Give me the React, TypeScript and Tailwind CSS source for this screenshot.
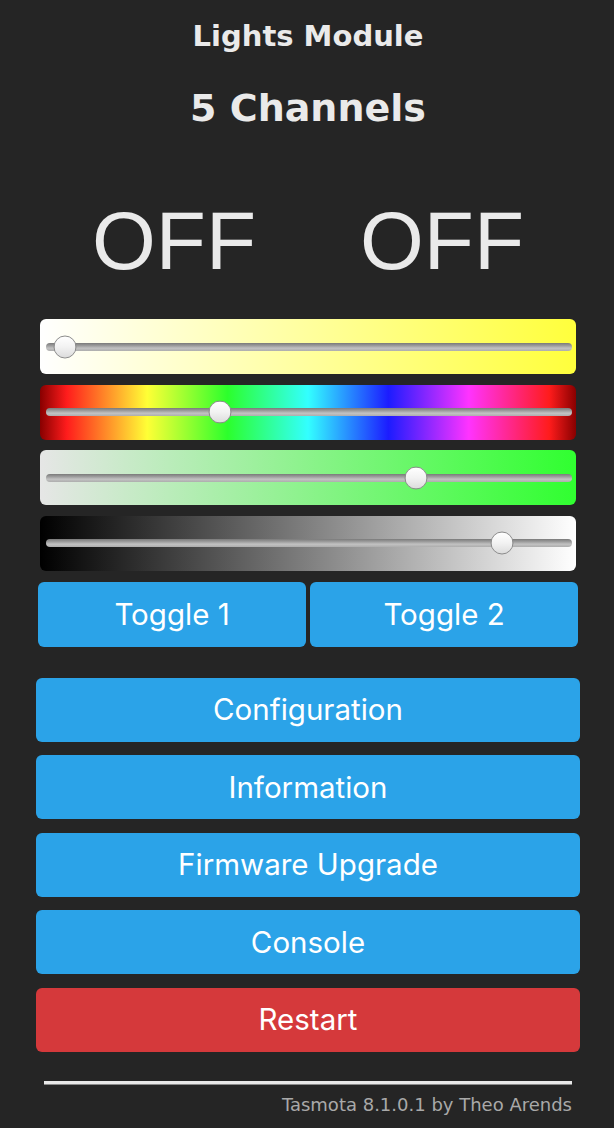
import React from "react";

const SLIDERS = [
  { bg: "bg-[linear-gradient(to_right,#ffffff,#ffff3c)]", x: 19 },
  {
    bg: "bg-[linear-gradient(to_right,#880000,#ff1c1c_5%,#ffff36_20%,#2cff2c_35%,#33ffff_50%,#1c1cff_65%,#ff33ff_80%,#ff1c1c_95%,#880000)]",
    x: 174,
  },
  { bg: "bg-[linear-gradient(to_right,#e6e6e6,#30ff30)]", x: 370 },
  { bg: "bg-[linear-gradient(to_right,#000000,#ffffff)]", x: 456 },
];

const BUTTONS = ["Configuration", "Information", "Firmware Upgrade", "Console"];

function Slider({ bg, x }: { bg: string; x: number }) {
  return (
    <div className={`flex h-[55px] items-center rounded-[6px] pl-[6px] pr-[4px] ${bg}`}>
      <div className="relative h-[8px] w-full rounded-full bg-[linear-gradient(to_bottom,#7a7a7a,#9e9e9e_35%,#c2c2c2_65%,#adadad)]">
        <div
          className="absolute top-1/2 h-[23px] w-[23px] -translate-x-1/2 -translate-y-1/2 rounded-full border border-[#8c8c8c] bg-[linear-gradient(to_bottom,#ffffff,#f2f2f2_50%,#dcdcdc)]"
          style={{ left: `${x}px` }}
        />
      </div>
    </div>
  );
}

export default function App() {
  return (
    <div className="min-h-[1128px] bg-[#252525] text-[#eaeaea]">
      <div className="ml-[36px] flex w-[544px] flex-col">
        <h2 className="h-[72px] text-center text-[29px] font-bold leading-[72px] [font-family:'DejaVu_Sans',sans-serif]">
          Lights Module
        </h2>
        <h3 className="h-[72px] text-center text-[38px] font-bold leading-[72px] [font-family:'DejaVu_Sans',sans-serif]">
          5 Channels
        </h3>

        <div className="mt-[53px] grid h-[88px] grid-cols-2 px-[4px] text-center text-[82px] leading-[88px] [font-family:'Liberation_Sans',sans-serif]">
          <div>OFF</div>
          <div>OFF</div>
        </div>

        <div className="mt-[34px] flex flex-col gap-[10.5px] px-[4px]">
          {SLIDERS.map((s, i) => (
            <Slider key={i} bg={s.bg} x={s.x} />
          ))}
        </div>

        <div className="mt-[11px] flex gap-[4px] px-[2px] [font-family:Inter,sans-serif]">
          <button className="h-[65px] flex-1 rounded-[6px] bg-[#2ba3e8] text-[29.5px] text-white">Toggle 1</button>
          <button className="h-[65px] flex-1 rounded-[6px] bg-[#2ba3e8] text-[29.5px] text-white">Toggle 2</button>
        </div>

        <div className="mt-[31px] flex flex-col gap-[13.5px] [font-family:Inter,sans-serif]">
          {BUTTONS.map((b) => (
            <button key={b} className="h-[64px] rounded-[6px] bg-[#2ba3e8] text-[29.5px] text-white">
              {b}
            </button>
          ))}
          <button className="h-[64px] rounded-[6px] bg-[#d5393b] text-[29.5px] text-white">Restart</button>
        </div>

        <div className="mx-[8px] mt-[29px] h-[4px] border-b border-[#8a8a8a] bg-[#e8e8e8]" />

        <div className="mt-[8px] pr-[8px] text-right text-[18px] leading-[24px] text-[#a9a9a9] [font-family:'DejaVu_Sans',sans-serif]">
          Tasmota 8.1.0.1 by Theo Arends
        </div>
      </div>
    </div>
  );
}
